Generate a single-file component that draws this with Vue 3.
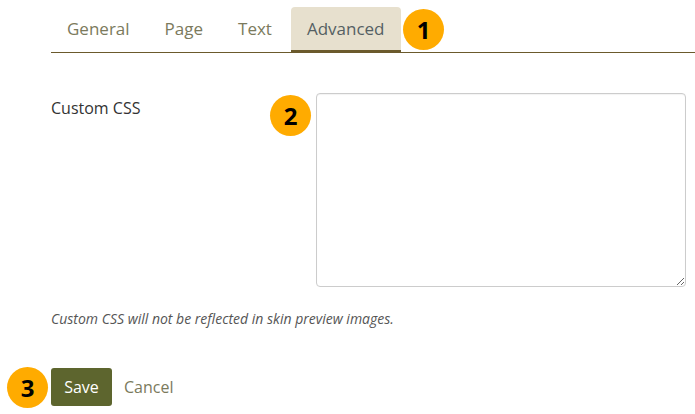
<template>
  <main class="page">
    <nav class="tabs">
      <a v-for="t in tabs" :key="t" class="tab" :class="{ active: t === 'Advanced' }">{{ t }}</a>
      <span class="badge b1">1</span>
    </nav>
    <section class="row">
      <label class="label" for="css">Custom CSS</label>
      <div class="field">
        <span class="badge b2">2</span>
        <textarea id="css" class="area"></textarea>
      </div>
    </section>
    <p class="hint">Custom CSS will not be reflected in skin preview images.</p>
    <div class="actions">
      <span class="badge b3">3</span>
      <button class="save">Save</button>
      <a class="cancel">Cancel</a>
    </div>
  </main>
</template>

<script setup>
const tabs = ['General', 'Page', 'Text', 'Advanced']
</script>

<style>
body { margin: 0; background: #fff; }
</style>

<style scoped>
.page {
  position: relative;
  width: 695px;
  height: 414px;
  overflow: hidden;
  padding: 7px 0 0 51px;
  box-sizing: border-box;
  font-family: "Open Sans", sans-serif;
  font-size: 16px;
  color: #333;
}
.tabs {
  display: flex;
  gap: 3px;
  height: 46px;
  box-sizing: border-box;
  border-bottom: 1px solid #6b5a2c;
  position: relative;
}
.tab {
  display: block;
  height: 45px;
  line-height: 44px;
  padding: 0 16px;
  box-sizing: border-box;
  font-size: 17px;
  color: #7b7a5c;
  border-radius: 4px 4px 0 0;
}
.tab.active {
  background: #e7e0ce;
  color: #555f63;
  border-bottom: 3px solid #6b5a2c;
  height: 46px;
}
.badge {
  position: absolute;
  width: 41px;
  height: 41px;
  border-radius: 50%;
  background: #ffab00;
  color: #000;
  font-weight: 700;
  font-size: 24px;
  line-height: 41px;
  text-align: center;
}
.b1 { left: 352px; top: 2px; }
.b2 { left: -46px; top: 2px; }
.b3 { left: -44px; top: -1px; }
.row {
  display: flex;
  margin-top: 40px;
}
.label {
  width: 265px;
  line-height: 28px;
  padding-top: 1px;
  color: #333;
}
.field { position: relative; }
.area {
  display: block;
  width: 370px;
  height: 194px;
  box-sizing: border-box;
  border: 1px solid #ccc;
  border-radius: 4px;
  outline: none;
  margin: 0;
  padding: 6px;
  box-shadow: inset 0 1px 1px rgba(0,0,0,.05);
}
.hint {
  margin: 22px 0 0;
  font-size: 14px;
  line-height: 19px;
  font-style: italic;
  color: #555;
}
.actions {
  position: relative;
  display: flex;
  align-items: center;
  margin-top: 40px;
}
.save {
  width: 61px;
  height: 38px;
  border: 0;
  border-radius: 3px;
  background: #5d652e;
  color: #fff;
  font: 16px "Open Sans", sans-serif;
  padding: 0;
}
.cancel {
  margin-left: 12px;
  font-size: 16px;
  color: #7b7a5c;
}
</style>
